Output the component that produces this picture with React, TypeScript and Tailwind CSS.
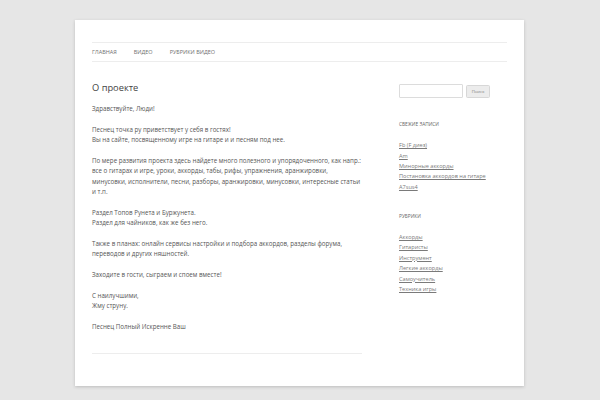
import React from "react";

const recent = ["Fb (F диез)", "Am", "Минорные аккорды", "Постановка аккордов на гитаре", "A7sus4"];
const cats = ["Аккорды", "Гитаристы", "Инструмент", "Легкие аккорды", "Самоучитель", "Техника игры"];

export default function App() {
  return (
    <div className="min-h-[400px] w-[600px] bg-[#e6e6e6] pt-[20px] pb-[15px]" style={{ fontFamily: '"Open Sans", "Liberation Sans", sans-serif' }}>
      <div className="ml-[75px] w-[449px] bg-white px-[17px] shadow-[0_1px_3px_rgba(100,100,100,0.3)]">
        <header className="pt-[22px] pb-[10px]">
          <nav className="flex h-[20px] items-center border-y border-[#ededed] pt-[1px] text-[5.5px] uppercase text-[#707070]">
            <span className="mr-[17px]">Главная</span>
            <span className="mr-[17px]">Видео</span>
            <span>Рубрики видео</span>
          </nav>
        </header>
        <div className="flex justify-between pt-[11.4px]">
          <main className="w-[270px] text-[#555]">
            <h1 className="text-[9.3px] leading-[10.4px] font-normal text-[#444]">О проекте</h1>
            <div className="mt-[10.4px] border-b border-[#ededed] pb-[10px] text-[6.2px] leading-[10.38px]">
              <p className="mb-[10.38px]">Здравствуйте, Люди!</p>
              <p className="mb-[10.38px]">Песнец точка ру приветствует у себя в гостях!<br />Вы на сайте, посвященному игре на гитаре и и песням под нее.</p>
              <p className="mb-[10.38px]">По мере развития проекта здесь найдете много полезного и упорядоченного, как напр.: все о гитарах и игре, уроки, аккорды, табы, рифы, упражнения, аранжировки, минусовки, исполнители, песни, разборы, аранжировки, минусовки, интересные статьи и т.п.</p>
              <p className="mb-[10.38px]">Раздел Топов Рунета и Буржунета.<br />Раздел для чайников, как же без него.</p>
              <p className="mb-[10.38px]">Также в планах: онлайн сервисы настройки и подбора аккордов, разделы форума, переводов и других няшностей.</p>
              <p className="mb-[10.38px]">Заходите в гости, сыграем и споем вместе!</p>
              <p className="mb-[10.38px]">С наилучшими,<br />Жму струну.</p>
              <p className="mb-[10.38px]">Песнец Полный Искренне Ваш</p>
            </div>
            <div className="h-[32px]" />
          </main>
          <aside className="w-[108px]">
            <div className="mt-[1px] flex items-center gap-[3px]">
              <div className="h-[14px] w-[64px] rounded-[1px] border border-[#dcdcdc] bg-white" />
              <div className="flex h-[13px] w-[24px] items-center justify-center rounded-[1.5px] border border-[#d7d7d7] bg-[#ececec] text-[4.3px] text-[#7c7c7c]">Поиск</div>
            </div>
            <h3 className="mt-[21px] text-[4.8px] leading-[10.4px] uppercase text-[#666]">Свежие записи</h3>
            <ul className="mt-[10.4px] text-[5.6px] leading-[10.4px] text-[#7a7a7a]">
              {recent.map((r) => (
                <li key={r}><span className="underline decoration-[0.5px] underline-offset-[1px]">{r}</span></li>
              ))}
            </ul>
            <h3 className="mt-[19px] text-[4.8px] leading-[10.4px] uppercase text-[#666]">Рубрики</h3>
            <ul className="mt-[10.4px] text-[5.6px] leading-[10.4px] text-[#7a7a7a]">
              {cats.map((r) => (
                <li key={r}><span className="underline decoration-[0.5px] underline-offset-[1px]">{r}</span></li>
              ))}
            </ul>
          </aside>
        </div>
      </div>
    </div>
  );
}
